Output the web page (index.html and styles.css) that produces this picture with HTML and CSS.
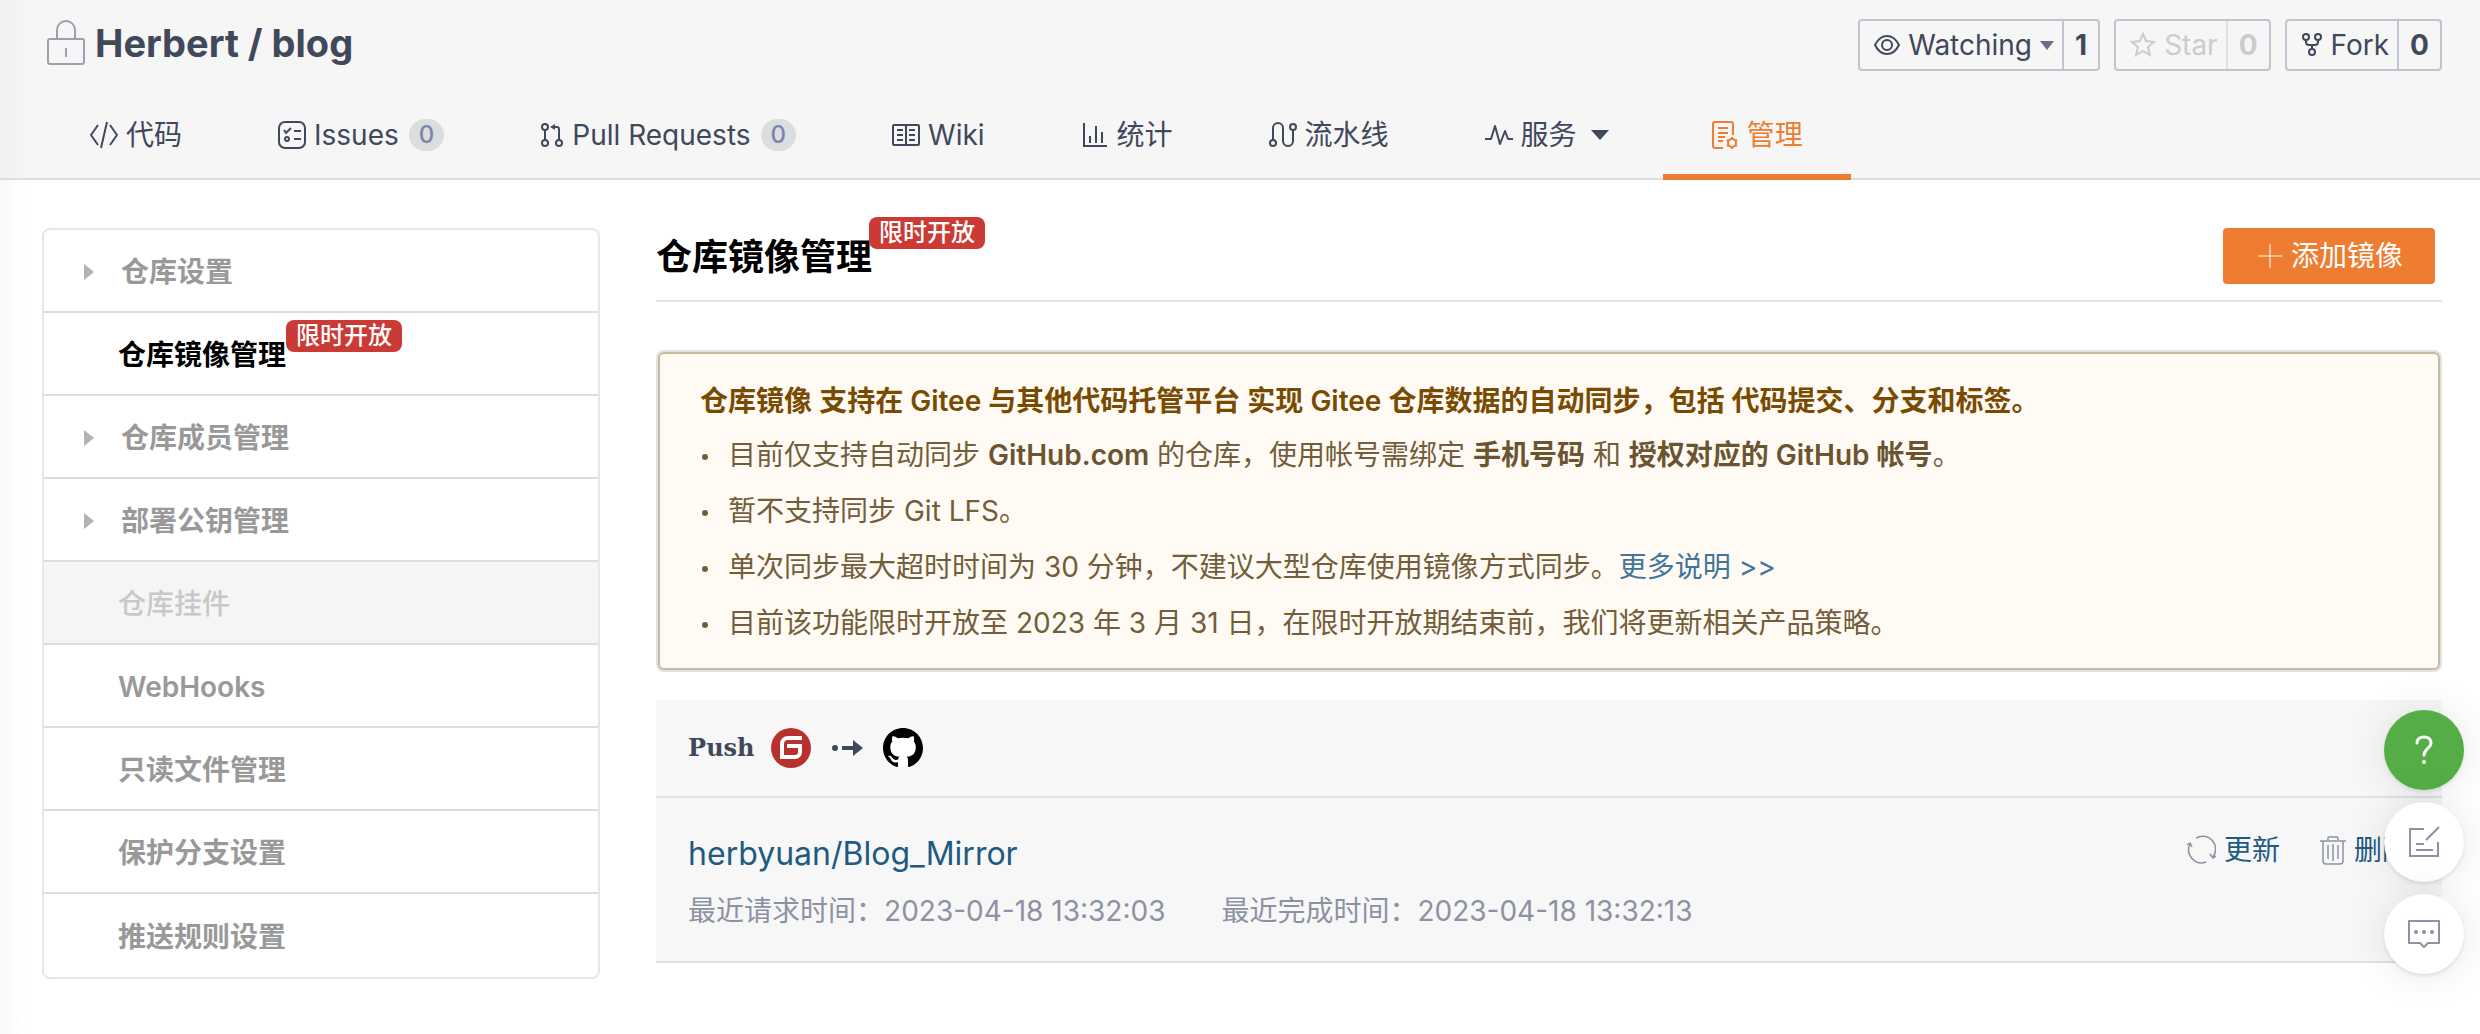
FILE: index.html
```html
<!DOCTYPE html>
<html lang="zh-CN">
<head>
    <meta charset="UTF-8">
    <meta name="viewport" content="width=device-width, initial-scale=1.0">
    <title>仓库镜像管理 - Herbert/blog</title>
    <link rel="stylesheet" href="styles.css">
</head>
<body>
    <header class="repo-header">
        <div class="repo-top">
            <h1 class="repo-title">
                <svg class="lock" width="40" height="46" viewBox="0 0 40 46" fill="none" stroke="#9ca1b2" stroke-width="2">
                    <rect x="2" y="19" width="36" height="25" rx="2"/>
                    <path d="M11 19V10a9 9 0 0 1 18 0v9M20 28v9"/>
                </svg>
                <a href="#">Herbert</a>
                <span>/</span>
                <a href="#">blog</a>
            </h1>
            <div class="repo-actions">
                <div class="action">
                    <button type="button" class="action-main">
                        <svg width="26" height="26" viewBox="0 0 26 26" fill="none" stroke="currentColor" stroke-width="2">
                            <path d="M1 13C4 7 8 4 13 4s9 3 12 9c-3 6-7 9-12 9S4 19 1 13z"/>
                            <circle cx="13" cy="13" r="5"/>
                        </svg>
                        Watching
                        <span class="caret"></span>
                    </button>
                    <a class="action-count" href="#">1</a>
                </div>
                <div class="action disabled">
                    <button type="button" class="action-main" disabled>
                        <svg width="26" height="26" viewBox="0 0 26 26" fill="none" stroke="currentColor" stroke-width="2">
                            <path d="M13 2l3 7 8 1-6 5 2 8-7-4-7 4 2-8-6-5 8-1z"/>
                        </svg>
                        Star
                    </button>
                    <a class="action-count" href="#">0</a>
                </div>
                <div class="action">
                    <button type="button" class="action-main">
                        <svg width="22" height="26" viewBox="0 0 22 26" fill="none" stroke="currentColor" stroke-width="2">
                            <circle cx="5" cy="5" r="3"/>
                            <circle cx="17" cy="5" r="3"/>
                            <circle cx="11" cy="20" r="3"/>
                            <path d="M5 8v2c0 2 1 3 3 3h6c2 0 3-1 3-3V8M11 13v4"/>
                        </svg>
                        Fork
                    </button>
                    <a class="action-count" href="#">0</a>
                </div>
            </div>
        </div>
        <nav class="repo-nav">
            <a href="#">
                <svg width="28" height="28" viewBox="0 0 28 28" fill="none" stroke="currentColor" stroke-width="2">
                    <path d="M8 4L1 14l7 10M20 4l7 10-7 10M17 1l-6 26"/>
                </svg>
                代码
            </a>
            <a href="#">
                <svg width="28" height="28" viewBox="0 0 28 28" fill="none" stroke="currentColor" stroke-width="2">
                    <rect x="1" y="1" width="26" height="26" rx="6"/>
                    <path d="M6 9l2 3 5-5M16 10h7M16 18h7"/>
                    <circle cx="9" cy="18" r="2"/>
                </svg>
                Issues
                <span class="count">0</span>
            </a>
            <a href="#">
                <svg width="24" height="28" viewBox="2 0 24 28" fill="none" stroke="currentColor" stroke-width="2">
                    <circle cx="7" cy="6" r="3"/>
                    <circle cx="7" cy="22" r="3"/>
                    <circle cx="21" cy="22" r="3"/>
                    <path d="M7 9v10M21 19V8q0-2-2-2h-4"/>
                    <path d="M12 6l5-3v6z" fill="currentColor" stroke="none"/>
                </svg>
                Pull Requests
                <span class="count">0</span>
            </a>
            <a href="#">
                <svg width="28" height="28" viewBox="0 0 28 28" fill="none" stroke="currentColor" stroke-width="2">
                    <rect x="1" y="4" width="26" height="20" rx="1"/>
                    <path d="M14 4v20M5 9h6M5 14h6M5 19h6M17 9h6M17 14h6M17 19h6"/>
                </svg>
                Wiki
            </a>
            <a href="#">
                <svg width="28" height="28" viewBox="0 0 28 28" fill="none" stroke="currentColor" stroke-width="2">
                    <path d="M3 2v23h23M9 22v-7M15 22V5M21 22V11"/>
                </svg>
                统计
            </a>
            <a href="#">
                <svg width="28" height="28" viewBox="0 0 28 28" fill="none" stroke="currentColor" stroke-width="2">
                    <circle cx="4" cy="22" r="3"/>
                    <circle cx="24" cy="6" r="3"/>
                    <path d="M4 19V7a5 5 0 0 1 10 0v13a5 5 0 0 0 10 0V9"/>
                </svg>
                流水线
            </a>
            <a href="#">
                <svg width="28" height="28" viewBox="0 0 28 28" fill="none" stroke="currentColor" stroke-width="2" stroke-linejoin="round">
                    <path d="M0 18h6l4-13 5 18 5-13 3 8h5"/>
                </svg>
                服务
                <span class="caret caret-lg"></span>
            </a>
            <a href="#" class="active">
                <svg width="28" height="28" viewBox="0 0 28 28" fill="none" stroke="currentColor" stroke-width="2">
                    <path d="M12 27H4a2 2 0 0 1-2-2V3a2 2 0 0 1 2-2h16a2 2 0 0 1 2 2v11M7 7h10M7 12h10M7 16h7M7 20h5"/>
                    <circle cx="21" cy="22" r="4"/>
                    <path d="M21 16v2M21 26v2M16 19l2 1M24 24l2 1M16 25l2-1M24 20l2-1"/>
                </svg>
                管理
            </a>
        </nav>
    </header>

    <div class="layout">
        <aside class="sidebar">
            <a href="#" class="parent">仓库设置</a>
            <a href="#" class="active">仓库镜像管理<span class="badge">限时开放</span></a>
            <a href="#" class="parent">仓库成员管理</a>
            <a href="#" class="parent">部署公钥管理</a>
            <a href="#" class="off">仓库挂件</a>
            <a href="#">WebHooks</a>
            <a href="#">只读文件管理</a>
            <a href="#">保护分支设置</a>
            <a href="#">推送规则设置</a>
        </aside>

        <main>
            <div class="page-head">
                <h2>仓库镜像管理<span class="badge">限时开放</span></h2>
                <button type="button" class="add-btn">
                    <svg width="26" height="26" viewBox="0 0 26 26" fill="none" stroke="currentColor" stroke-width="1">
                        <path d="M13 1v24M1 13h24"/>
                    </svg>
                    添加镜像
                </button>
            </div>

            <div class="notice">
                <h3>仓库镜像 支持在 Gitee 与其他代码托管平台 实现 Gitee 仓库数据的自动同步，包括 代码提交、分支和标签。</h3>
                <ul>
                    <li>目前仅支持自动同步 <b>GitHub.com</b> 的仓库，使用帐号需绑定 <b>手机号码</b> 和 <b>授权对应的 GitHub 帐号</b>。</li>
                    <li>暂不支持同步 Git LFS。</li>
                    <li>单次同步最大超时时间为 30 分钟，不建议大型仓库使用镜像方式同步。<a href="#">更多说明 &gt;&gt;</a></li>
                    <li>目前该功能限时开放至 2023 年 3 月 31 日，在限时开放期结束前，我们将更新相关产品策略。</li>
                </ul>
            </div>

            <section class="mirror">
                <div class="mirror-head">
                    <span class="direction">Push</span>
                    <svg width="40" height="40" viewBox="0 0 40 40">
                        <circle cx="20" cy="20" r="20" fill="#b9312c"/>
                        <path d="M31 10H17a6 6 0 0 0-6 6v13h13a5 5 0 0 0 5-5v-6H16" fill="none" stroke="#fff" stroke-width="4"/>
                    </svg>
                    <svg class="arrow" width="32" height="16" viewBox="0 0 32 16" fill="#40485b">
                        <circle cx="4" cy="8" r="3"/>
                        <path d="M11 6h11V0l10 8-10 8v-6H11z"/>
                    </svg>
                    <svg width="40" height="40" viewBox="0 0 16 16">
                        <circle cx="8" cy="8" r="7.6" fill="#fff"/>
                        <path fill-rule="evenodd" d="M8 0C3.58 0 0 3.58 0 8c0 3.54 2.29 6.53 5.47 7.59.4.07.55-.17.55-.38 0-.19-.01-.82-.01-1.49-2.01.37-2.53-.49-2.69-.94-.09-.23-.48-.94-.82-1.13-.28-.15-.68-.52-.01-.53.63-.01 1.08.58 1.23.82.72 1.21 1.87.87 2.33.66.07-.52.28-.87.51-1.07-1.78-.2-3.64-.89-3.64-3.95 0-.87.31-1.59.82-2.15-.08-.2-.36-1.02.08-2.12 0 0 .67-.21 2.2.82.64-.18 1.32-.27 2-.27s1.36.09 2 .27c1.53-1.04 2.2-.82 2.2-.82.44 1.1.16 1.92.08 2.12.51.56.82 1.27.82 2.15 0 3.07-1.87 3.75-3.65 3.95.29.25.54.73.54 1.48 0 1.07-.01 1.93-.01 2.2 0 .21.15.46.55.38A8.01 8.01 0 0 0 16 8c0-4.42-3.58-8-8-8z"/>
                    </svg>
                </div>
                <div class="mirror-row">
                    <div class="mirror-info">
                        <a class="mirror-name" href="#">herbyuan/Blog_Mirror</a>
                        <p class="mirror-times">
                            <span>最近请求时间：2023-04-18 13:32:03</span>
                            <span>最近完成时间：2023-04-18 13:32:13</span>
                        </p>
                    </div>
                    <div class="mirror-ops">
                        <a href="#">
                            <svg width="30" height="30" viewBox="0 0 30 30" fill="none" stroke="#8c92a4" stroke-width="1.5">
                                <path d="M10 3a13 13 0 0 1 17 19M20 27A13 13 0 0 1 4 9M1 10l3-2 2 4M24 19l3 4 3-2"/>
                            </svg>
                            更新
                        </a>
                        <a href="#">
                            <svg width="26" height="30" viewBox="0 0 26 30" fill="none" stroke="#8c92a4" stroke-width="1.5">
                                <path d="M0 6h26M8 5V3q0-1 1-1h8q1 0 1 1v2M3 6v20q0 3 3 3h14q3 0 3-3V6M8 10v14M13 9v17M18 10v14"/>
                            </svg>
                            删除
                        </a>
                    </div>
                </div>
            </section>
        </main>
    </div>

    <div class="float-tools">
        <button type="button" class="help" aria-label="帮助">
            <svg width="20" height="30" viewBox="0 0 20 30" fill="none" stroke="#fff" stroke-width="3" stroke-linecap="round">
                <path d="M3 8c0-4 3-6 7-6s7 2 7 6c0 5-7 6-7 12"/>
                <circle cx="10" cy="27" r="2" fill="#fff" stroke="none"/>
            </svg>
        </button>
        <button type="button" aria-label="反馈">
            <svg width="32" height="32" viewBox="0 0 32 32" fill="none" stroke="#8c92a4" stroke-width="2">
                <path d="M16 3H2v27h28V16M31 1L18 14M8 18h8M8 24h17"/>
            </svg>
        </button>
        <button type="button" aria-label="评论">
            <svg width="32" height="30" viewBox="0 0 32 30" fill="none" stroke="#8c92a4" stroke-width="2">
                <path d="M1 2h30v22H20l-4 4-4-4H1z" stroke-linejoin="round"/>
                <g fill="#8c92a4" stroke="none">
                    <circle cx="8" cy="13" r="2"/>
                    <circle cx="16" cy="13" r="2"/>
                    <circle cx="24" cy="13" r="2"/>
                </g>
            </svg>
        </button>
    </div>
</body>
</html>
```
FILE: styles.css
```css
* {
    box-sizing: border-box;
}
body {
    margin: 0;
    font-family: Inter, "Noto Sans CJK SC", sans-serif;
    font-size: 28px;
    line-height: 40px;
    color: #40485b;
    background: linear-gradient(to right, #f8f8f8, #fff 26px);
}
a {
    color: inherit;
    text-decoration: none;
}
button {
    font: inherit;
    color: inherit;
    border: 0;
    background: none;
    padding: 0;
    cursor: pointer;
}
svg {
    flex: none;
}
h1, h2, h3, p, ul {
    margin: 0;
    padding: 0;
}

/* header */
.repo-header {
    background: linear-gradient(to right, #f0f0f0, #f6f6f6 26px);
    border-bottom: 2px solid #ddd;
}
.repo-top {
    display: flex;
    justify-content: space-between;
    align-items: center;
    height: 90px;
    padding: 0 38px 0 46px;
}
.repo-title {
    display: flex;
    align-items: center;
    gap: 9px;
    padding-bottom: 4px;
    font-size: 38px;
    font-weight: 700;
}
.repo-actions {
    display: flex;
    gap: 14px;
}
.action {
    display: flex;
    height: 52px;
    border: 2px solid #c0c3d0;
    border-radius: 4px;
}
.action-main {
    display: flex;
    align-items: center;
    gap: 8px;
    padding: 0 8px 0 14px;
}
.action-count {
    display: flex;
    align-items: center;
    padding: 0 11px;
    font-weight: 700;
    border-left: 2px solid #c0c3d0;
}
.disabled {
    color: #ccc;
}
.disabled .action-count {
    border-color: #e0e0e0;
}
.caret {
    border: 7px solid transparent;
    border-top: 9px solid #6b7080;
    border-bottom: 0;
}
.caret-lg {
    margin: 0 6px;
    border-width: 10px 9px 0;
    border-top-color: #40485b;
}
.repo-nav {
    display: flex;
    height: 90px;
    margin-bottom: -2px;
    padding: 0 42px;
}
.repo-nav a {
    display: flex;
    align-items: center;
    gap: 8px;
    padding: 6px 48px 0;
    border-bottom: 6px solid transparent;
}
.repo-nav .active {
    color: #ee7c31;
    border-color: #ee7c31;
}
.count {
    margin-left: 2px;
    padding: 0 10px;
    font-size: 24px;
    font-weight: 500;
    line-height: 32px;
    color: #7a86ad;
    background: #dcdddf;
    border-radius: 16px;
}

/* layout */
.layout {
    display: grid;
    grid-template-columns: 5fr 16fr;
    gap: 56px;
    align-items: start;
    padding: 48px 38px 40px 42px;
}
.badge {
    padding: 0 10px;
    font-size: 24px;
    line-height: 32px;
    font-weight: 500;
    white-space: nowrap;
    color: #fff;
    background: #cb3a34;
    border-radius: 8px;
}
.sidebar {
    display: flex;
    flex-direction: column;
    overflow: hidden;
    border: 2px solid #e3e8ed;
    border-radius: 8px;
    font-weight: 600;
    color: #999;
}
.sidebar a {
    display: flex;
    align-items: center;
    height: 83px;
    padding-top: 2px;
    padding-left: 74px;
    border-bottom: 2px solid #ddd;
}
.sidebar a:last-child {
    border-bottom: 0;
}
.sidebar .parent {
    padding-left: 40px;
}
.parent::before {
    content: "";
    margin-right: 27px;
    border: 8px solid transparent;
    border-left: 10px solid #b3b3b3;
    border-right: 0;
}
.sidebar .active {
    color: #000;
}
.sidebar .badge {
    align-self: flex-start;
    margin-top: 5px;
}
.sidebar .off {
    font-weight: 500;
    color: #c8c8c8;
    background: #f5f5f5;
}

/* main */
.page-head {
    display: flex;
    justify-content: space-between;
    align-items: flex-start;
    height: 74px;
    padding-right: 7px;
    border-bottom: 2px solid #e3e3e3;
}
.page-head h2 {
    position: relative;
    font-size: 36px;
    font-weight: 600;
    line-height: 58px;
    color: #000;
}
.page-head .badge {
    position: absolute;
    left: 100%;
    top: -11px;
    margin-left: -3px;
}
.add-btn {
    display: flex;
    align-items: center;
    gap: 8px;
    height: 56px;
    padding: 0 32px 0 34px;
    color: #fff;
    background: #ee7c31;
    border-radius: 4px;
}
.notice {
    margin: 50px 2px 0;
    padding: 25px 40px 17px;
    color: #735d3a;
    background: #fffbf4;
    border: 2px solid #c9ba9b;
    border-radius: 6px;
    box-shadow: 0 0 0 2px #dde3e8;
}
.notice h3 {
    font-size: 28px;
    line-height: 44px;
    font-weight: 600;
    color: #794b02;
}
.notice ul {
    margin-top: 4px;
    list-style: none;
}
.notice li {
    line-height: 56px;
}
.notice li::before {
    content: "";
    display: inline-block;
    width: 6px;
    height: 6px;
    margin: 0 20px 5px 2px;
    background: #735d3a;
    border-radius: 50%;
}
.notice b {
    font-weight: 600;
    color: #6b5530;
}
.notice a {
    color: #437599;
}

/* mirror list */
.mirror {
    margin-top: 30px;
    background: #f7f7f7;
}
.mirror-head {
    display: flex;
    align-items: center;
    gap: 16px;
    height: 98px;
    padding: 0 32px;
    border-bottom: 2px solid #dde2e6;
}
.direction {
    font-family: "DejaVu Serif", serif;
    font-size: 24px;
    font-weight: 700;
}
.arrow {
    margin: 0 4px;
}
.mirror-row {
    display: flex;
    justify-content: space-between;
    align-items: flex-start;
    padding: 32px 32px 30px;
    border-bottom: 2px solid #dde2e6;
}
.mirror-name {
    display: block;
    font-size: 32px;
    line-height: 48px;
    color: #1e5a82;
}
.mirror-times {
    display: flex;
    gap: 56px;
    margin-top: 13px;
    color: #8c92a4;
}
.mirror-ops {
    display: flex;
    gap: 40px;
    color: #1e5a82;
}
.mirror-ops a {
    display: flex;
    align-items: center;
    gap: 8px;
}

/* floating tools */
.float-tools {
    position: fixed;
    right: 16px;
    bottom: 60px;
    display: flex;
    flex-direction: column;
    gap: 12px;
}
.float-tools button {
    display: flex;
    align-items: center;
    justify-content: center;
    width: 80px;
    height: 80px;
    background: #fff;
    border-radius: 50%;
    box-shadow: 0 2px 4px rgba(0,0,0,0.1), 0 0 40px rgba(0,0,0,0.1);
}
.float-tools .help {
    background: #55ad45;
}
```
